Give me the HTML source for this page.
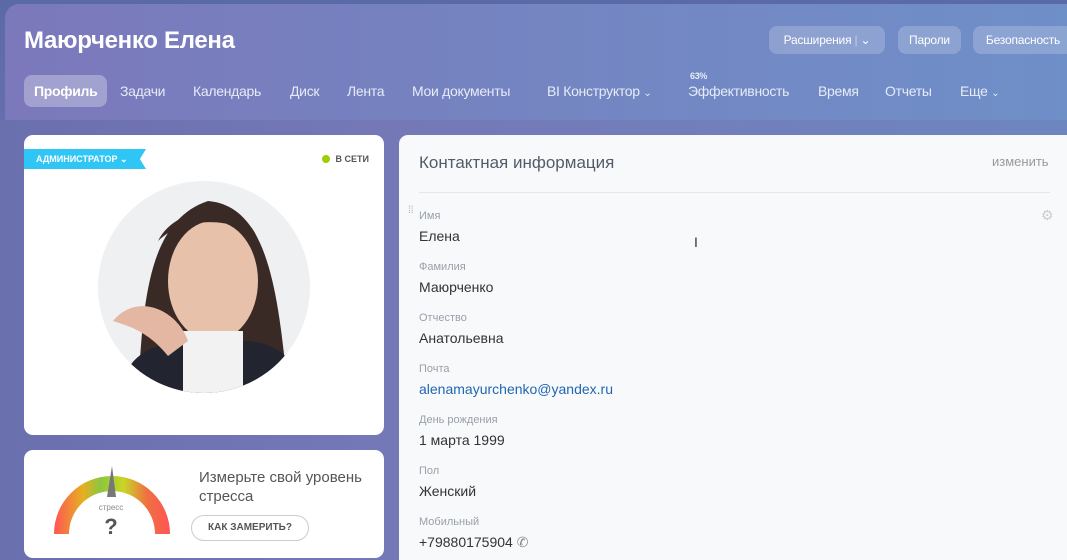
<!DOCTYPE html>
<html><head><meta charset="utf-8"><style>
*{margin:0;padding:0;box-sizing:border-box}
html,body{width:1067px;height:560px;overflow:hidden}
body{font-family:"Liberation Sans","Noto Sans CJK SC",sans-serif;background:linear-gradient(180deg,#5a6aa8 0%,#6a70b0 30%,#6a5a9e 75%,#4f4a90 100%);position:relative}
.hdr{position:absolute;left:5px;top:4px;width:1070px;height:116px;border-radius:14px 0 0 0;background:linear-gradient(90deg,#7b78bb 0%,#7485c2 50%,#6f8fc9 100%)}
.bottombg{position:absolute;left:0;top:120px;width:1067px;height:440px;background:linear-gradient(90deg,#6a6fae 0%,#7578b6 35%,#6e86c0 100%)}
.title{position:absolute;left:24px;top:27px;color:#fff;font-size:24px;font-weight:bold;letter-spacing:-0.3px}
.nav span{position:absolute;top:83px;color:#e6ebf7;font-size:14px;white-space:nowrap;letter-spacing:-0.3px}
.act{position:absolute;left:24px;top:75px;width:83px;height:32px;border-radius:8px;background:rgba(255,255,255,.3)}
.btn{position:absolute;top:26px;height:28px;line-height:28px;border-radius:8px;background:rgba(255,255,255,.2);color:#fff;font-size:12px;text-align:center;letter-spacing:-0.2px}
.card{position:absolute;background:#fff;border-radius:9px}
.lbl{font-size:11px;color:#9aa0a8;margin-bottom:6px}
.val{font-size:14px;color:#333;margin-bottom:17px}
</style></head><body>
<div class="bottombg"></div>
<div class="hdr"></div>
<div class="title">Маюрченко Елена</div>
<div class="btn" style="left:769px;width:116px">Расширения <span style="opacity:.5">|</span> ⌄</div>
<div class="btn" style="left:898px;width:63px">Пароли</div>
<div class="btn" style="left:973px;width:100px">Безопасность</div>
<div class="act"></div>
<div class="nav">
<span style="left:34px;color:#fff;font-weight:bold">Профиль</span>
<span style="left:120px">Задачи</span>
<span style="left:193px">Календарь</span>
<span style="left:290px">Диск</span>
<span style="left:347px">Лента</span>
<span style="left:412px">Мои документы</span>
<span style="left:547px">BI Конструктор <small style="font-size:10px">⌄</small></span>
<span style="left:688px">Эффективность</span>
<span style="left:690px;top:71px;font-size:9px;font-weight:bold">63%</span>
<span style="left:818px">Время</span>
<span style="left:885px">Отчеты</span>
<span style="left:960px">Еще <small style="font-size:10px">⌄</small></span>
</div>

<div class="card" style="left:24px;top:135px;width:360px;height:300px">
<div style="position:absolute;left:0;top:14px;height:20px;width:122px;background:#2fc6f6;color:#fff;font-size:9px;font-weight:bold;line-height:20px;padding-left:12px;clip-path:polygon(0 0,100% 0,95% 50%,100% 100%,0 100%)">АДМИНИСТРАТОР ⌄</div>
<div style="position:absolute;right:15px;top:19px;font-size:9px;color:#555;font-weight:bold"><span style="display:inline-block;width:8px;height:8px;border-radius:50%;background:#9dcf00;margin-right:6px;vertical-align:-1px"></span>В СЕТИ</div>
<svg style="position:absolute;left:74px;top:46px" width="212" height="212" viewBox="0 0 212 212">
<defs><clipPath id="c"><circle cx="106" cy="106" r="106"/></clipPath></defs>
<g clip-path="url(#c)">
<rect width="212" height="212" fill="#eef0f2"/>
<path d="M40 212 C45 120 50 40 110 20 C170 25 180 110 190 212Z" fill="#3a2a26"/>
<ellipse cx="115" cy="100" rx="45" ry="60" fill="#e8c1ab"/>
<path d="M60 60 C80 20 150 20 160 60 C150 40 90 30 60 60Z" fill="#3a2a26"/>
<rect x="85" y="150" width="60" height="70" fill="#f2f2f2"/>
<path d="M20 212 C30 170 60 160 85 165 L85 212Z M145 160 C180 160 200 180 205 212 L145 212Z" fill="#222430"/>
<path d="M15 140 C40 110 80 130 90 160 L70 175 C50 150 30 145 15 140Z" fill="#e4b7a2"/>
</g></svg>
</div>

<div class="card" style="left:24px;top:450px;width:360px;height:108px">
<svg style="position:absolute;left:28px;top:14px" width="120" height="80" viewBox="0 0 120 80">
<defs><linearGradient id="g" x1="0" x2="1"><stop offset="0" stop-color="#f55"/><stop offset=".25" stop-color="#e6b020"/><stop offset=".4" stop-color="#8cc63f"/><stop offset=".6" stop-color="#c8d626"/><stop offset=".8" stop-color="#f07040"/><stop offset="1" stop-color="#f55"/></linearGradient></defs>
<path d="M2 70 A58 58 0 0 1 118 70 L103 70 A43 43 0 0 0 17 70Z" fill="url(#g)"/>
<path d="M55 33 L60 2 L64 33Z" fill="#777"/>
<text x="59" y="46" font-size="8" fill="#888" text-anchor="middle" font-family="Liberation Sans">стресс</text>
<text x="59" y="70" font-size="22" font-weight="bold" fill="#555" text-anchor="middle" font-family="Liberation Sans">?</text>
</svg>
<div style="position:absolute;left:175px;top:18px;font-size:15px;color:#555;line-height:19px">Измерьте свой уровень<br>стресса</div>
<div style="position:absolute;left:167px;top:65px;width:118px;height:26px;border:1px solid #ccc;border-radius:13px;font-size:10px;font-weight:bold;color:#555;text-align:center;line-height:24px">КАК ЗАМЕРИТЬ?</div>
</div>

<div class="card" style="left:399px;top:135px;width:690px;height:440px;background:#f8f9fb;border-radius:9px 0 0 0">
<div style="position:absolute;left:20px;top:18px;font-size:17px;color:#535c69">Контактная информация</div>
<div style="position:absolute;left:593px;top:19px;font-size:13px;color:#999">изменить</div>
<div style="position:absolute;left:20px;top:57px;width:631px;height:1px;background:#e4e6e9"></div>
<div style="position:absolute;left:9px;top:74px;font-size:10px;color:#aaa;line-height:4px">⁞⁞</div>
<div style="position:absolute;left:642px;top:72px;font-size:14px;color:#ccc">⚙</div>
<div style="position:absolute;left:295px;top:99px;font-size:14px;color:#333">I</div>
<div style="position:absolute;left:20px;top:75px">
<div class="lbl">Имя</div><div class="val">Елена</div>
<div class="lbl">Фамилия</div><div class="val">Маюрченко</div>
<div class="lbl">Отчество</div><div class="val">Анатольевна</div>
<div class="lbl">Почта</div><div class="val" style="color:#2067b0">alenamayurchenko@yandex.ru</div>
<div class="lbl">День рождения</div><div class="val">1 марта 1999</div>
<div class="lbl">Пол</div><div class="val">Женский</div>
<div class="lbl">Мобильный</div><div class="val">+79880175904 <span style="color:#888">✆</span></div>
</div>
</div>
</body></html>
